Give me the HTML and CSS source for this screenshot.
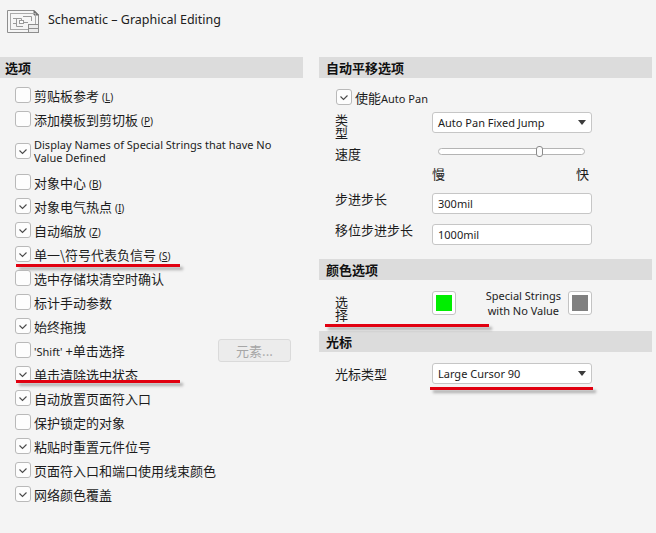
FILE: index.html
```html
<!DOCTYPE html>
<html lang="zh">
<head>
<meta charset="utf-8">
<title>Schematic – Graphical Editing</title>
<link rel="stylesheet" href="styles.css">
</head>
<body>
<div class="app">
  <header class="titlebar">
    <svg class="app-icon" viewBox="0 0 32 23" width="32" height="23" aria-hidden="true">
      <path d="M0.5 0.5 H27 L31.5 5 V22.5 H0.5 Z" fill="#f6f6f6" stroke="#8e8e8e"/>
      <path d="M27 0.5 V5 H31.5 Z" fill="#6f6f6f" stroke="#6f6f6f"/>
      <rect x="3.5" y="3.5" width="25" height="16" fill="none" stroke="#aaaaaa"/>
      <path d="M6 8.5 H14.5 V12.5 H21 M9.5 8.5 V16.5 H16 M16 6.5 H24.5 V11 M6 13.5 H9.5" fill="none" stroke="#9a9a9a"/>
      <rect x="12.5" y="10.5" width="4" height="3" fill="#ffffff" stroke="#9a9a9a"/>
      <rect x="21.5" y="14.5" width="10" height="8" fill="#ececec" stroke="#8e8e8e"/>
      <path d="M21.5 18.5 H31.5" stroke="#8e8e8e"/>
    </svg>
    <span class="title">Schematic – Graphical Editing</span>
  </header>

  <div class="columns">
    <section class="col col-left">
      <h2 class="sec-head">选项</h2>
      <ul class="checks">
        <li class="check-row"><span class="box"></span><span>剪贴板参考 <span class="key">(<u>L</u>)</span></span></li>
        <li class="check-row"><span class="box"></span><span>添加模板到剪切板 <span class="key">(<u>P</u>)</span></span></li>
        <li class="check-row tall"><span class="box on"><svg viewBox="0 0 14 14"><path d="M3.5 6.5 L6.5 9.5 L10.5 5.5"/></svg></span><span class="latin two-line">Display Names of Special Strings that have No Value Defined</span></li>
        <li class="check-row"><span class="box"></span><span>对象中心 <span class="key">(<u>B</u>)</span></span></li>
        <li class="check-row"><span class="box on"><svg viewBox="0 0 14 14"><path d="M3.5 6.5 L6.5 9.5 L10.5 5.5"/></svg></span><span>对象电气热点 <span class="key">(<u>I</u>)</span></span></li>
        <li class="check-row"><span class="box on"><svg viewBox="0 0 14 14"><path d="M3.5 6.5 L6.5 9.5 L10.5 5.5"/></svg></span><span>自动缩放 <span class="key">(<u>Z</u>)</span></span></li>
        <li class="check-row mark mark-low"><span class="box on"><svg viewBox="0 0 14 14"><path d="M3.5 6.5 L6.5 9.5 L10.5 5.5"/></svg></span><span>单一\符号代表负信号 <span class="key">(<u>S</u>)</span></span></li>
        <li class="check-row"><span class="box"></span><span>选中存储块清空时确认</span></li>
        <li class="check-row"><span class="box"></span><span>标计手动参数</span></li>
        <li class="check-row"><span class="box on"><svg viewBox="0 0 14 14"><path d="M3.5 6.5 L6.5 9.5 L10.5 5.5"/></svg></span><span>始终拖拽</span></li>
        <li class="check-row"><span class="box"></span><span><span class="latin">'Shift'</span> +单击选择</span><button class="btn-elem" type="button" disabled>元素...</button></li>
        <li class="check-row mark mark-high"><span class="box on"><svg viewBox="0 0 14 14"><path d="M3.5 6.5 L6.5 9.5 L10.5 5.5"/></svg></span><span>单击清除选中状态</span></li>
        <li class="check-row"><span class="box on"><svg viewBox="0 0 14 14"><path d="M3.5 6.5 L6.5 9.5 L10.5 5.5"/></svg></span><span>自动放置页面符入口</span></li>
        <li class="check-row"><span class="box"></span><span>保护锁定的对象</span></li>
        <li class="check-row"><span class="box on"><svg viewBox="0 0 14 14"><path d="M3.5 6.5 L6.5 9.5 L10.5 5.5"/></svg></span><span>粘贴时重置元件位号</span></li>
        <li class="check-row"><span class="box on"><svg viewBox="0 0 14 14"><path d="M3.5 6.5 L6.5 9.5 L10.5 5.5"/></svg></span><span>页面符入口和端口使用线束颜色</span></li>
        <li class="check-row"><span class="box on"><svg viewBox="0 0 14 14"><path d="M3.5 6.5 L6.5 9.5 L10.5 5.5"/></svg></span><span>网络颜色覆盖</span></li>
      </ul>
    </section>

    <section class="col col-right">
      <h2 class="sec-head">自动平移选项</h2>
      <div class="group">
        <div class="enable-row"><span class="box on"><svg viewBox="0 0 14 14"><path d="M3.5 6.5 L6.5 9.5 L10.5 5.5"/></svg></span><span>使能<span class="latin">Auto Pan</span></span></div>

        <div class="form-row row-type">
          <span class="field-label"><span class="stacked">类型</span></span>
          <div class="select"><span class="latin">Auto Pan Fixed Jump</span><span class="caret"></span></div>
        </div>

        <div class="form-row row-speed">
          <span class="field-label">速度</span>
          <div class="slider"><span class="track"></span><span class="thumb"></span></div>
        </div>

        <div class="form-row row-scale">
          <span class="field-label"></span>
          <div class="scale"><span>慢</span><span>快</span></div>
        </div>

        <div class="form-row row-step">
          <span class="field-label">步进步长</span>
          <div class="input"><span class="latin">300mil</span></div>
        </div>

        <div class="form-row row-shift">
          <span class="field-label">移位步进步长</span>
          <div class="input"><span class="latin">1000mil</span></div>
        </div>
      </div>

      <h2 class="sec-head head-color">颜色选项</h2>
      <div class="group">
        <div class="form-row row-color">
          <span class="field-label"><span class="stacked">选择</span></span>
          <div class="color-controls">
            <span class="swatch"><span class="swatch-fill fill-green"></span></span>
            <span class="latin swatch-caption">Special Strings<br>with No Value</span>
            <span class="swatch"><span class="swatch-fill fill-gray"></span></span>
          </div>
        </div>
      </div>

      <h2 class="sec-head head-cursor">光标</h2>
      <div class="group">
        <div class="form-row row-cursor">
          <span class="field-label">光标类型</span>
          <div class="select select-marked"><span class="latin">Large Cursor 90</span><span class="caret"></span></div>
        </div>
      </div>
    </section>
  </div>
</div>
</body>
</html>
```

FILE: styles.css
```css
* {
  box-sizing: border-box;
}

body {
  margin: 0;
  background: #f4f4f4;
  font-family: "Noto Sans CJK SC", "Noto Sans", sans-serif;
  font-size: 13px;
  color: #1c1c1c;
}

.latin {
  font-family: "Noto Sans", "Noto Sans CJK SC", sans-serif;
  font-size: 11px;
}

.app {
  width: 656px;
  height: 533px;
  overflow: hidden;
}

/* title bar */
.titlebar {
  height: 57px;
  display: flex;
  align-items: flex-start;
  gap: 9px;
  padding: 10px 0 0 7px;
}

.app-icon {
  width: 32px;
  height: 23px;
  flex: none;
}

.title {
  font-family: "Noto Sans", sans-serif;
  font-size: 12.5px;
  line-height: 20px;
  color: #202020;
}

/* columns */
.columns {
  display: grid;
  grid-template-columns: 303px 333px;
  column-gap: 16px;
}

.sec-head {
  margin: 0;
  height: 21px;
  line-height: 21px;
  background: #dcdcdc;
  font-size: 13px;
  font-weight: 700;
  color: #111;
  padding-left: 7px;
}

.col-left .sec-head {
  padding-left: 5px;
}

/* checkboxes */
.box {
  width: 16px;
  height: 16px;
  flex: none;
  border: 1px solid #b9b9b9;
  border-radius: 3px;
  background: #fdfdfd;
  display: flex;
  align-items: center;
  justify-content: center;
}

.box svg {
  width: 14px;
  height: 14px;
}

.box path {
  fill: none;
  stroke: #4a4a4a;
  stroke-width: 1.1;
}

.checks {
  list-style: none;
  margin: 0;
  padding: 5px 0 0 15px;
}

.check-row {
  position: relative;
  display: flex;
  align-items: center;
  gap: 3px;
  height: 24px;
  white-space: nowrap;
}

.check-row.tall {
  height: 39px;
}

.two-line {
  white-space: normal;
  line-height: 13px;
  width: 250px;
}

.key {
  font-family: "Noto Sans", sans-serif;
  font-size: 10px;
}

.btn-elem {
  margin-left: auto;
  margin-right: 12px;
  width: 73px;
  height: 23px;
  border: 1px solid #dadada;
  border-radius: 3px;
  background: #ececec;
  color: #a6a6a6;
  font-family: "Noto Sans CJK SC", sans-serif;
  font-size: 13px;
  padding: 0;
}

/* red annotation strokes */
.mark::after,
.row-color::after,
.select-marked::after {
  content: "";
  position: absolute;
  height: 3px;
  background: #e10010;
  box-shadow: 3px 3px 3px rgba(0, 0, 0, 0.3);
}

.mark::after {
  left: 1px;
  width: 164px;
}

.mark-low::after {
  top: 22px;
}

.mark-high::after {
  top: 18px;
}

/* right column */
.group {
  padding-left: 16px;
}

.enable-row {
  display: flex;
  align-items: center;
  gap: 3px;
  height: 16px;
  margin-top: 11px;
  padding-left: 1px;
}

.form-row {
  position: relative;
  display: flex;
  align-items: flex-start;
}

.field-label {
  width: 97px;
  flex: none;
  line-height: 13px;
}

.stacked {
  display: block;
  width: 14px;
  line-height: 13px;
}

.select,
.input {
  width: 160px;
  height: 21px;
  border: 1px solid #c6c6c6;
  border-radius: 3px;
  background: #fff;
  display: flex;
  align-items: center;
  padding: 0 5px;
}

.select {
  justify-content: space-between;
  position: relative;
}

.caret {
  width: 0;
  height: 0;
  border-left: 4px solid transparent;
  border-right: 4px solid transparent;
  border-top: 5px solid #3c3c3c;
}

.row-type {
  margin-top: 7px;
}

.row-type .field-label {
  padding-top: 1px;
}

.row-speed {
  margin-top: 8px;
  height: 13px;
}

.slider {
  position: relative;
  width: 160px;
  height: 13px;
}

.track {
  position: absolute;
  left: 6px;
  top: 1px;
  width: 147px;
  height: 7px;
  border: 1px solid #b4b4b4;
  border-radius: 4px;
  background: #fff;
}

.thumb {
  position: absolute;
  left: 104px;
  top: -1px;
  width: 7px;
  height: 11px;
  border: 1px solid #8a8a8a;
  border-radius: 3px;
  background: #fbfbfb;
}

.row-scale {
  margin-top: 7px;
}

.scale {
  width: 160px;
  display: flex;
  justify-content: space-between;
  padding-right: 3px;
  line-height: 13px;
}

.row-step {
  margin-top: 13px;
}

.row-shift {
  margin-top: 10px;
}

.row-step .field-label,
.row-shift .field-label {
  margin-top: -1px;
}

.head-color {
  margin-top: 14px;
}

.row-color {
  margin-top: 11px;
  height: 30px;
}

.row-color .field-label {
  padding-top: 4px;
}

.row-color::after {
  left: -10px;
  top: 33px;
  width: 164px;
}

.color-controls {
  width: 160px;
  display: flex;
  align-items: center;
  height: 24px;
}

.swatch {
  width: 24px;
  height: 24px;
  flex: none;
  border: 1px solid #c3c3c3;
  border-radius: 3px;
  background: #fff;
  padding: 3px;
}

.swatch-fill {
  display: block;
  width: 100%;
  height: 100%;
}

.fill-green {
  background: #00ee00;
}

.fill-gray {
  background: #808080;
}

.swatch-caption {
  margin-left: auto;
  margin-right: 7px;
  line-height: 15px;
  text-align: center;
  color: #222;
}

.head-cursor {
  margin-top: 10px;
}

.row-cursor {
  margin-top: 11px;
  align-items: center;
}

.select-marked::after {
  left: -3px;
  top: 23px;
  width: 163px;
}
```
